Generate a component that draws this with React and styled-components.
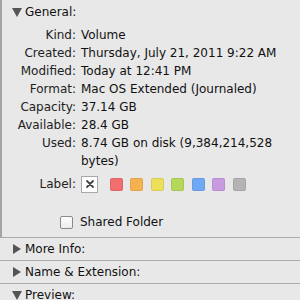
import React from "react";
import styled, { createGlobalStyle } from "styled-components";

const GlobalStyle = createGlobalStyle`
  html, body {
    margin: 0;
    padding: 0;
    background: #e8e8e8;
  }
  body {
    font-family: "DejaVu Sans", "Liberation Sans", sans-serif;
    font-size: 12px;
    color: #111;
  }
`;

const info = [
  ["Kind:", "Volume"],
  ["Created:", "Thursday, July 21, 2011 9:22 AM"],
  ["Modified:", "Today at 12:41 PM"],
  ["Format:", "Mac OS Extended (Journaled)"],
  ["Capacity:", "37.14 GB"],
  ["Available:", "28.4 GB"],
  ["Used:", "8.74 GB on disk (9,384,214,528 bytes)"],
];

const labelColors = [
  "#f26d6d",
  "#f5b24f",
  "#ece05a",
  "#b6d85a",
  "#6fa8f5",
  "#c89be0",
  "#b4b4b4",
];

const App = () => {
  return (
    <>
      <GlobalStyle />
      <Panel>
        <General>
          <Header>
            <Triangle open />
            <span>General:</span>
          </Header>
          <InfoGrid>
            {info.map(([label, value]) => (
              <React.Fragment key={label}>
                <Label>{label}</Label>
                <Value>{value}</Value>
              </React.Fragment>
            ))}
            <Label center>Label:</Label>
            <Swatches>
              <NoneBox>
                <svg width="10" height="10" viewBox="0 0 10 10">
                  <path
                    d="M2 2 L8 8 M8 2 L2 8"
                    stroke="#444"
                    strokeWidth="1.8"
                    strokeLinecap="round"
                  />
                </svg>
              </NoneBox>
              {labelColors.map((c) => (
                <Swatch key={c} color={c} />
              ))}
            </Swatches>
          </InfoGrid>
          <CheckRow>
            <Checkbox />
            <span>Shared Folder</span>
          </CheckRow>
        </General>
        {[
          ["More Info:", false],
          ["Name & Extension:", false],
          ["Preview:", true],
        ].map(([title, open]) => (
          <Collapsed key={title}>
            <Header tall>
              <Triangle open={open} />
              <span>{title}</span>
            </Header>
          </Collapsed>
        ))}
      </Panel>
    </>
  );
};

const Panel = styled.div`
  width: 300px;
  height: 300px;
  overflow: hidden;
  display: flex;
  flex-direction: column;
`;

const General = styled.div`
  height: 238px;
  flex-shrink: 0;
  box-sizing: border-box;
  padding-top: 3px;
  border-left: 2px solid #a3a3a3;
  border-bottom: 1px solid #ababab;
`;

const Collapsed = styled.div`
  height: 23px;
  flex-shrink: 0;
  box-sizing: border-box;
  border-bottom: 1px solid #ababab;
`;

const Header = styled.div`
  display: flex;
  align-items: center;
  height: ${(p) => (p.tall ? "22px" : "18px")};
  padding-left: ${(p) => (p.tall ? "12px" : "10px")};
  gap: 3px;
  color: #111;
`;

const Triangle = styled.span`
  width: 0;
  height: 0;
  ${(p) =>
    p.open
      ? `
    border-left: 5px solid transparent;
    border-right: 5px solid transparent;
    border-top: 9px solid #555;
  `
      : `
    border-top: 5px solid transparent;
    border-bottom: 5px solid transparent;
    border-left: 8px solid #555;
    margin: 0 1px;
  `}
`;

const InfoGrid = styled.div`
  display: grid;
  grid-template-columns: 74px 1fr;
  column-gap: 5px;
  margin-top: 5px;
  padding-right: 12px;
  line-height: 18px;
`;

const Label = styled.div`
  text-align: right;
  color: #222;
  align-self: ${(p) => (p.center ? "center" : "start")};
  margin-top: ${(p) => (p.center ? "3px" : "0")};
`;

const Value = styled.div`
  color: #111;
`;

const Swatches = styled.div`
  display: flex;
  align-items: center;
  height: 22px;
  margin-top: 3px;
  gap: 7.5px;
`;

const NoneBox = styled.div`
  width: 15px;
  height: 15px;
  background: #fff;
  border: 1px solid #a8a8a8;
  display: flex;
  align-items: center;
  justify-content: center;
  margin-right: 4px;
`;

const Swatch = styled.div`
  width: 13px;
  height: 13px;
  border-radius: 2px;
  background: ${(p) => p.color};
  box-shadow: inset 0 0 0 1px rgba(0, 0, 0, 0.08);
`;

const CheckRow = styled.div`
  display: flex;
  align-items: center;
  gap: 7px;
  padding-left: 58px;
  margin-top: 18px;
  line-height: 18px;
`;

const Checkbox = styled.span`
  width: 11px;
  height: 11px;
  border: 1px solid #8a8a8a;
  border-radius: 2px;
  background: linear-gradient(#fdfdfd, #ececec);
`;

export default App;
